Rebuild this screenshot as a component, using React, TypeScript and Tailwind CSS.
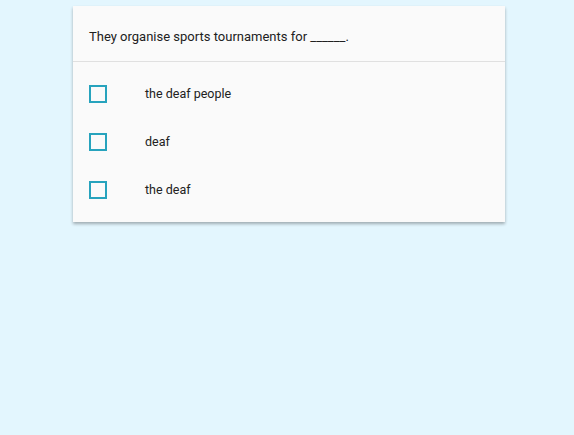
import React from 'react'

const options = ['the deaf people', 'deaf', 'the deaf']

export default function App() {
    return (
        <div className="min-h-[435px] w-full bg-[#e3f6fe] pt-[6px] font-['Roboto',sans-serif]">
            <div className="ml-[73px] w-[432px] bg-[#fafafa] shadow-[0_2px_3px_rgba(0,0,0,0.3)]">
                <div className="flex h-[55px] items-center px-4 pt-[7px] text-[13px] text-[#212121]">
                    They organise sports tournaments for ______.
                </div>
                <div className="h-px bg-[#e0e0e0]" />
                <div className="pt-2 pb-2">
                    {options.map((opt) => (
                        <label key={opt} className="flex h-12 items-center px-4 text-[12.5px] text-[#212121]">
                            <span className="box-border h-[18px] w-[18px] border-2 border-[#27a3bd]" />
                            <span className="ml-[38px]">{opt}</span>
                        </label>
                    ))}
                </div>
            </div>
        </div>
    )
}
